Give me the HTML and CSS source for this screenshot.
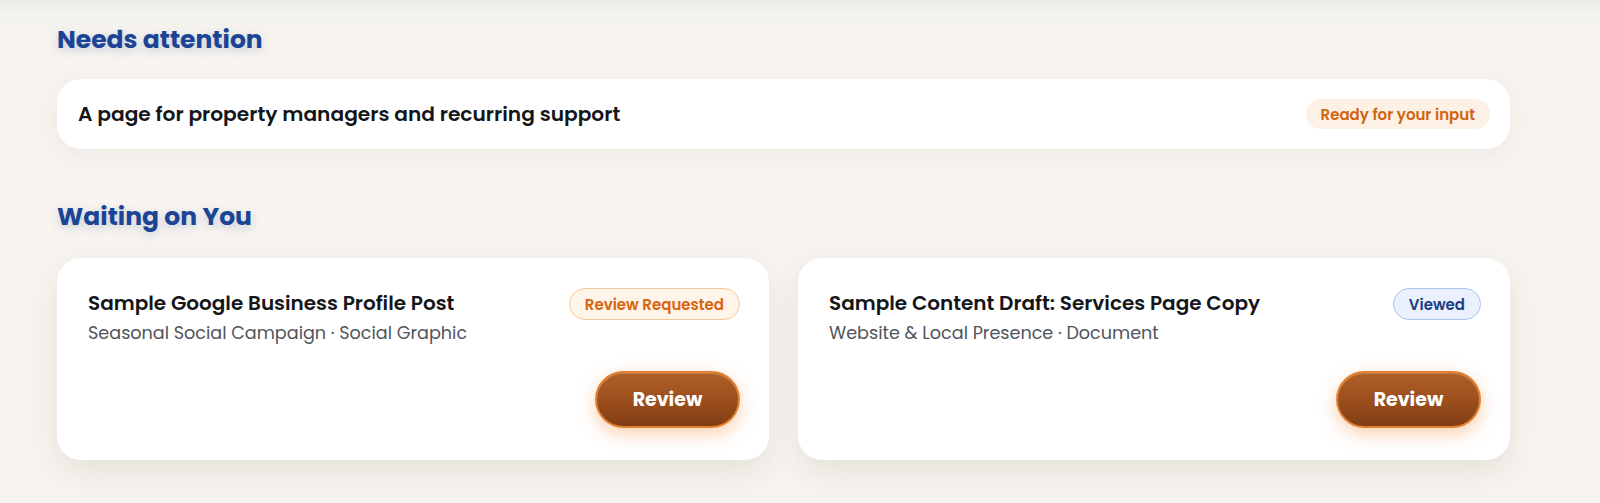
FILE: index.html
```html
<!DOCTYPE html>
<html>
<head>
<meta charset="utf-8">
<link rel="stylesheet" href="styles.css">
</head>
<body>
<div class="page">
  <section class="section">
    <h2 class="heading">Needs attention</h2>
    <div class="attention-card">
      <span class="attention-title">A page for property managers and recurring support</span>
      <span class="pill pill-soft">Ready for your input</span>
    </div>
  </section>
  <section class="section section-second">
    <h2 class="heading">Waiting on You</h2>
    <div class="grid">
      <div class="card">
        <div class="card-top">
          <div class="card-text">
            <div class="card-title">Sample Google Business Profile Post</div>
            <div class="card-sub">Seasonal Social Campaign · Social Graphic</div>
          </div>
          <span class="pill pill-orange">Review Requested</span>
        </div>
        <div class="card-actions">
          <button class="btn">Review</button>
        </div>
      </div>
      <div class="card">
        <div class="card-top">
          <div class="card-text">
            <div class="card-title">Sample Content Draft: Services Page Copy</div>
            <div class="card-sub">Website &amp; Local Presence · Document</div>
          </div>
          <span class="pill pill-blue">Viewed</span>
        </div>
        <div class="card-actions">
          <button class="btn">Review</button>
        </div>
      </div>
    </div>
  </section>
</div>
</body>
</html>
```
FILE: styles.css
```css
html, body {
  margin: 0;
  padding: 0;
}
body {
  background: linear-gradient(to bottom, #ecebe8 0px, #f4f2ee 14px, #f7f4ef 40px);
  font-family: "Poppins", "Open Sans", "Noto Sans", sans-serif;
  color: #15161a;
  height: 503px;
  overflow: hidden;
}
.page {
  padding: 22px 90px 0 57px;
}
.section-second {
  margin-top: 50px;
}
.heading {
  margin: 0;
  font-size: 25px;
  line-height: 36px;
  font-weight: 700;
  color: #1b4594;
  text-shadow: 0 3px 10px rgba(27, 69, 148, 0.22);
}
.attention-card {
  margin-top: 21px;
  height: 70px;
  box-sizing: border-box;
  background: #fff;
  border-radius: 24px;
  display: flex;
  align-items: center;
  justify-content: space-between;
  padding: 0 20px 0 21px;
  box-shadow: 0 6px 24px rgba(60, 50, 30, 0.06);
}
.attention-title {
  font-size: 20.2px;
  font-weight: 600;
}
.pill {
  display: inline-flex;
  align-items: center;
  justify-content: center;
  height: 30px;
  box-sizing: border-box;
  border-radius: 16px;
  font-size: 15px;
  font-weight: 600;
  white-space: nowrap;
}
.pill-soft {
  background: #fdf0e4;
  color: #d0650f;
  padding: 0 15px;
}
.pill-orange {
  height: 32px;
  background: #fff4ea;
  border: 1px solid #f6c79c;
  color: #d8650d;
  padding: 0 15px;
}
.pill-blue {
  height: 32px;
  background: #eaf1fc;
  border: 1px solid #a9c4ee;
  color: #1a3f86;
  padding: 0 15px;
}
.grid {
  margin-top: 23px;
  display: grid;
  grid-template-columns: 1fr 1fr;
  gap: 29px;
}
.card {
  background: #fff;
  border-radius: 24px;
  height: 202px;
  box-sizing: border-box;
  padding: 30px 29px 32px 31px;
  display: flex;
  flex-direction: column;
  justify-content: space-between;
  box-shadow: 0 12px 30px rgba(60, 50, 30, 0.09);
}
.card-top {
  display: flex;
  justify-content: space-between;
  align-items: flex-start;
  gap: 16px;
}
.card-title {
  font-size: 20px;
  font-weight: 600;
  line-height: 30px;
}
.card-sub {
  font-size: 17.6px;
  line-height: 28px;
  color: #50545c;
  margin-top: 1px;
}
.card-actions {
  display: flex;
  justify-content: flex-end;
}
.btn {
  width: 145px;
  height: 57px;
  border-radius: 29px;
  border: 2px solid #e2802f;
  background: linear-gradient(to bottom, #ad5f28 0%, #9a4e1c 55%, #7f3d12 100%);
  color: #fff;
  font-family: inherit;
  font-size: 19px;
  font-weight: 700;
  box-shadow: 0 6px 18px rgba(240, 120, 30, 0.35), inset 0 1px 0 rgba(255, 200, 150, 0.3);
  cursor: pointer;
}
```
